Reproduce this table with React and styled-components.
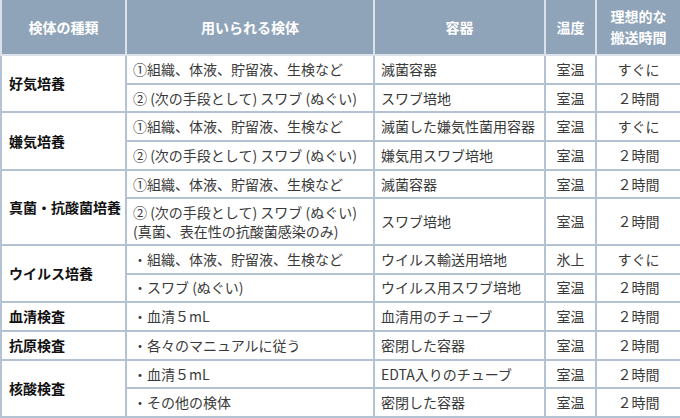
import React from 'react';
import styled, { createGlobalStyle } from 'styled-components';

const Global = createGlobalStyle`
  html, body { margin: 0; padding: 0; background: #fff; }
  body { font-family: "Noto Sans CJK JP", "Noto Sans", sans-serif; }
`;

const Table = styled.table`
  width: 680px;
  table-layout: fixed;
  border-collapse: collapse;
  font-size: 14px;
  color: #3a3a3a;
`;

const Col = styled.col`
  width: ${(p) => p.$w}px;
`;

const Th = styled.th`
  height: 55px;
  box-sizing: border-box;
  padding: 0 4px;
  background: #8fa4b9;
  color: #fff;
  font-weight: bold;
  line-height: 21px;
  text-align: center;
  vertical-align: middle;
  border: 2px solid #dbe2ea;
  border-top: none;
`;

const Td = styled.td`
  box-sizing: border-box;
  height: ${(p) => (p.$tall ? 46.5 : 28.7)}px;
  padding: 0 ${(p) => (p.$center ? 2 : 6)}px 0 ${(p) => (p.$center ? 2 : 6)}px;
  border: 2px solid #b3c3d4;
  line-height: 19px;
  text-align: ${(p) => (p.$center ? 'center' : 'left')};
  vertical-align: middle;
  white-space: nowrap;
`;

const GroupTd = styled(Td)`
  font-weight: bold;
  color: #111;
  padding-left: 7px;
`;

const groups = [
  {
    name: '好気培養',
    rows: [
      ['①組織、体液、貯留液、生検など', '滅菌容器', '室温', 'すぐに'],
      ['② (次の手段として) スワブ (ぬぐい)', 'スワブ培地', '室温', '２時間'],
    ],
  },
  {
    name: '嫌気培養',
    rows: [
      ['①組織、体液、貯留液、生検など', '滅菌した嫌気性菌用容器', '室温', 'すぐに'],
      ['② (次の手段として) スワブ (ぬぐい)', '嫌気用スワブ培地', '室温', '２時間'],
    ],
  },
  {
    name: '真菌・抗酸菌培養',
    rows: [
      ['①組織、体液、貯留液、生検など', '滅菌容器', '室温', '２時間'],
      ['② (次の手段として) スワブ (ぬぐい)\n(真菌、表在性の抗酸菌感染のみ)', 'スワブ培地', '室温', '２時間', true],
    ],
  },
  {
    name: 'ウイルス培養',
    rows: [
      ['・組織、体液、貯留液、生検など', 'ウイルス輸送用培地', '氷上', 'すぐに'],
      ['・スワブ (ぬぐい)', 'ウイルス用スワブ培地', '室温', '２時間'],
    ],
  },
  {
    name: '血清検査',
    rows: [['・血清５mL', '血清用のチューブ', '室温', '２時間']],
  },
  {
    name: '抗原検査',
    rows: [['・各々のマニュアルに従う', '密閉した容器', '室温', '２時間']],
  },
  {
    name: '核酸検査',
    rows: [
      ['・血清５mL', 'EDTA入りのチューブ', '室温', '２時間'],
      ['・その他の検体', '密閉した容器', '室温', '２時間'],
    ],
  },
];

function MultiLine({ text }) {
  const parts = text.split('\n');
  return parts.map((t, i) => (
    <React.Fragment key={i}>
      {i > 0 && <br />}
      {t}
    </React.Fragment>
  ));
}

export default function App() {
  return (
    <>
      <Global />
      <Table>
        <colgroup>
          <Col $w={125} />
          <Col $w={248} />
          <Col $w={171} />
          <Col $w={51} />
          <Col $w={85} />
        </colgroup>
        <thead>
          <tr>
            <Th>検体の種類</Th>
            <Th>用いられる検体</Th>
            <Th>容器</Th>
            <Th>温度</Th>
            <Th>
              理想的な
              <br />
              搬送時間
            </Th>
          </tr>
        </thead>
        <tbody>
          {groups.map((g) =>
            g.rows.map((r, i) => (
              <tr key={g.name + i}>
                {i === 0 && <GroupTd rowSpan={g.rows.length}>{g.name}</GroupTd>}
                <Td $tall={r[4]}>
                  <MultiLine text={r[0]} />
                </Td>
                <Td $tall={r[4]}>{r[1]}</Td>
                <Td $tall={r[4]} $center>{r[2]}</Td>
                <Td $tall={r[4]} $center>{r[3]}</Td>
              </tr>
            ))
          )}
        </tbody>
      </Table>
    </>
  );
}
